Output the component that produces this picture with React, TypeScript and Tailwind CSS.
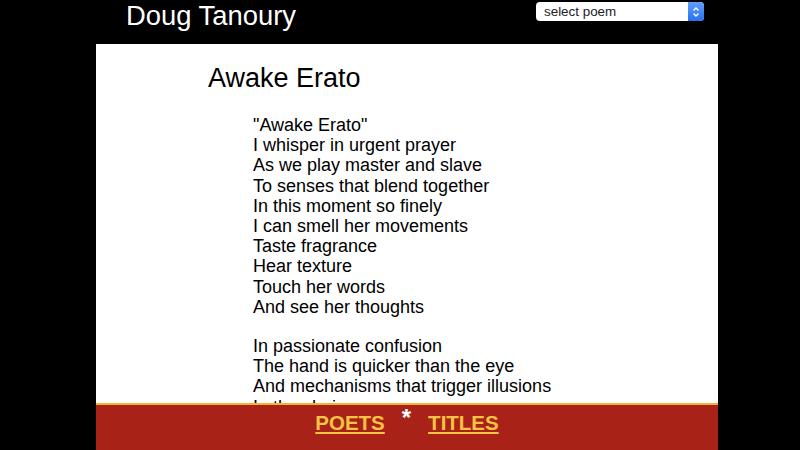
import { useState } from "react";

const poem: string[][] = [
  [
    '"Awake Erato"',
    "I whisper in urgent prayer",
    "As we play master and slave",
    "To senses that blend together",
    "In this moment so finely",
    "I can smell her movements",
    "Taste fragrance",
    "Hear texture",
    "Touch her words",
    "And see her thoughts",
  ],
  [
    "In passionate confusion",
    "The hand is quicker than the eye",
    "And mechanisms that trigger illusions",
    "In the chaimes",
    "Of her bright amusements",
  ],
];

const App = () => {
  const [selected, setSelected] = useState("");

  return (
    <div className="flex h-screen flex-col overflow-hidden bg-black font-['Liberation_Sans',Arial,sans-serif]">
      <header className="flex h-[44px] shrink-0 items-start">
        <h1 className="ml-[126px] mt-[-1px] text-[27.4px] leading-[34px] text-white">Doug Tanoury</h1>
        <div className="relative ml-auto mr-[96px] mt-[2px] h-[19px] w-[168px]">
          <select
            value={selected}
            onChange={(event) => setSelected(event.target.value)}
            className="block h-[19px] w-full appearance-none rounded-[4px] bg-white py-0 pl-[8px] text-[13.4px] leading-[19px] text-[#222] outline-none"
          >
            <option value="">select poem</option>
            <option value="awake-erato">Awake Erato</option>
          </select>
          <span className="pointer-events-none absolute right-0 top-0 flex h-[19px] w-[16px] items-center justify-center rounded-r-[4px] bg-gradient-to-b from-[#5fa0fb] to-[#2a6ff0]">
            <svg width="8" height="12" viewBox="0 0 8 12" fill="none" stroke="white" strokeWidth="1.4">
              <path d="M1.5 4.5 L4 2 L6.5 4.5" />
              <path d="M1.5 7.5 L4 10 L6.5 7.5" />
            </svg>
          </span>
        </div>
      </header>

      <main className="ml-[96px] w-[622px] flex-1 overflow-hidden bg-white text-black">
        <h2 className="ml-[112px] mt-[19px] text-[27px] leading-[30px]">Awake Erato</h2>
        <div className="ml-[157px] mt-[22px] text-[18px] leading-[20.2px]">
          {poem.map((stanza, index) => (
            <p key={index} className="mb-[19px]">
              {stanza.map((line) => (
                <span key={line} className="block">
                  {line}
                </span>
              ))}
            </p>
          ))}
        </div>
      </main>

      <footer className="ml-[96px] flex h-[47px] w-[622px] shrink-0 items-start justify-center gap-[17px] border-t-2 border-[#f2b23a] bg-[#a82218] pt-[5px]">
        <a href="#" className="text-[20.5px] font-bold leading-[26px] text-[#f7c345] underline decoration-2 underline-offset-[2px]">
          POETS
        </a>
        <span className="mt-[-5px] text-[24px] font-bold leading-[26px] text-white">*</span>
        <a href="#" className="text-[20.5px] font-bold leading-[26px] text-[#f7c345] underline decoration-2 underline-offset-[2px]">
          TITLES
        </a>
      </footer>
    </div>
  );
};

export default App;
